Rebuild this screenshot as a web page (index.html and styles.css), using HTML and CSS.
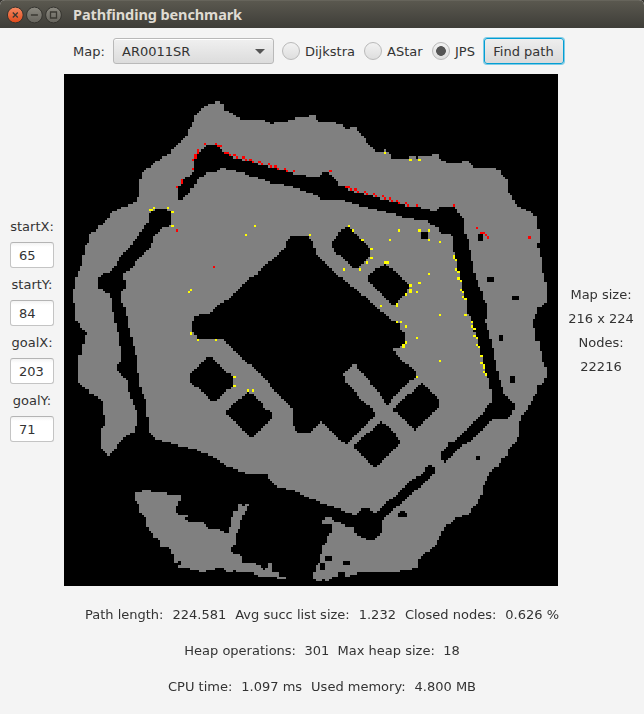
FILE: index.html
```html
<!DOCTYPE html>
<html lang="en">
<head>
<meta charset="utf-8">
<title>Pathfinding benchmark</title>
<link rel="stylesheet" href="styles.css">
</head>
<body>
<div class="window">
  <header class="titlebar">
    <svg class="controls" width="56" height="18" viewBox="0 0 56 18">
      <defs>
        <linearGradient id="close" x1="0" y1="0" x2="0" y2="1"><stop offset="0" stop-color="#f58a63"/><stop offset="1" stop-color="#e0491a"/></linearGradient>
        <linearGradient id="plain" x1="0" y1="0" x2="0" y2="1"><stop offset="0" stop-color="#8b8980"/><stop offset="1" stop-color="#66645d"/></linearGradient>
      </defs>
      <g stroke="#35342f" stroke-width="1">
        <circle cx="9.3" cy="9" r="7.9" fill="url(#close)"/>
        <circle cx="28.4" cy="9" r="7.9" fill="url(#plain)"/>
        <circle cx="47.5" cy="9" r="7.9" fill="url(#plain)"/>
      </g>
      <g fill="none" stroke="#3a3832" stroke-width="1.3">
        <path d="M6.8 6.5l5 5M11.8 6.5l-5 5"/>
        <path d="M24.9 9h7"/>
        <path d="M44.5 6h6v6h-6z"/>
      </g>
    </svg>
    <h1 class="title">Pathfinding benchmark</h1>
  </header>

  <div class="toolbar">
    <span class="map-label">Map:</span>
    <div class="select"><span>AR0011SR</span><i class="arrow"></i></div>
    <div class="radio dijkstra"><i class="dot"></i><span>Dijkstra</span></div>
    <div class="radio astar"><i class="dot"></i><span>AStar</span></div>
    <div class="radio jps"><i class="dot on"></i><span>JPS</span></div>
    <button class="find">Find path</button>
  </div>

  <main class="content">
    <section class="coords">
      <span class="name">startX:</span><div class="field">65</div>
      <span class="name">startY:</span><div class="field">84</div>
      <span class="name">goalX:</span><div class="field">203</div>
      <span class="name">goalY:</span><div class="field">71</div>
    </section>
    <canvas class="map" id="map" width="216" height="224"></canvas>
    <section class="info">
      <span>Map size:</span><span>216 x 224</span><span>Nodes:</span><span>22216</span>
    </section>
  </main>

  <footer class="stats">
    <div class="line"><span>Path length:</span><span>224.581</span><span>Avg succ list size:</span><span>1.232</span><span>Closed nodes:</span><span>0.626 %</span></div>
    <div class="line tight"><span>Heap operations:</span><span>301</span><span>Max heap size:</span><span>18</span></div>
    <div class="line"><span>CPU time:</span><span>1.097 ms</span><span>Used memory:</span><span>4.800 MB</span></div>
  </footer>
</div>
<script src="map.js"></script>
</body>
</html>
```
FILE: styles.css
```css
* { box-sizing: border-box; }
body {
  margin: 0;
  background: #3a3833;
  font: 13px/16px "DejaVu Sans", sans-serif;
  color: #333;
}
.window { width: 644px; height: 714px; background: #f4f4f4; overflow: hidden; border-radius: 5px 5px 0 0; }
.titlebar {
  height: 28px;
  display: flex;
  align-items: center;
  padding-left: 6px;
  background: linear-gradient(#5a584f, #3e3d38);
  border-top: 1px solid #66645b;
}
.controls { flex: none; }
.title {
  margin: 0 0 2px 11px;
  font: bold 14.5px/20px "Noto Sans", sans-serif;
  letter-spacing: -0.1px;
  color: #dfdbd2;
  white-space: nowrap;
}
.toolbar { height: 46px; display: flex; align-items: center; padding-left: 73px; white-space: nowrap; }
.toolbar span { padding-top: 2px; }
.map-label { width: 40px; }
.select {
  width: 161px;
  height: 26px;
  display: flex;
  align-items: center;
  justify-content: space-between;
  padding: 0 8px;
  border: 1px solid #b9b9b9;
  border-radius: 3px;
  background: linear-gradient(#f0f0f0, #dcdcdc);
  box-shadow: inset 0 1px #fff;
}
.arrow { border: 5px solid transparent; border-top-color: #555; border-bottom: 0; }
.radio { display: flex; align-items: center; gap: 5px; }
.dijkstra { margin-left: 8px; width: 82px; }
.astar { width: 68px; }
.jps { width: 52px; }
.dot {
  flex: none;
  width: 18px;
  height: 18px;
  border: 1px solid #b9b9b9;
  border-radius: 50%;
  background: linear-gradient(#f2f2f2, #dedede);
}
.dot.on { background: radial-gradient(circle, #555 0 4.5px, transparent 5.2px), linear-gradient(#f2f2f2, #dedede); }
.find {
  width: 80px;
  height: 26px;
  padding: 2px 1px 0 0;
  font: inherit;
  color: inherit;
  border: 1px solid #039ed3;
  border-radius: 3px;
  background: linear-gradient(#eee, #dadada);
  box-shadow: 0 0 0 1px #7fcbe6;
}
.content { height: 512px; display: flex; }
.coords { width: 64px; display: flex; flex-direction: column; align-items: center; padding-top: 141px; }
.name { height: 27px; line-height: 24px; }
.field {
  width: 44px;
  height: 26px;
  margin-bottom: 5px;
  padding-left: 8px;
  line-height: 25px;
  border: 1px solid #c4c4c4;
  border-top-color: #b4b4b4;
  border-radius: 3px;
  background: linear-gradient(#f3f3f3, #fff 4px);
}
.map { flex: none; width: 494px; height: 512px; background: #000; image-rendering: pixelated; }
.info { flex: 1; display: flex; flex-direction: column; align-items: center; gap: 8px; padding-top: 213px; white-space: nowrap; }
.stats { padding-top: 21px; display: flex; flex-direction: column; gap: 20px; }
.line { display: flex; justify-content: center; gap: 9px; white-space: nowrap; }
.line.tight { gap: 8.4px; }
```
FILE: map.js
```js
// Outlines use a 1482 x 1536 space that is sampled down to the 216 x 224 grid.
const COLS = 216, ROWS = 224, SX = 1482 / COLS, SY = 1536 / ROWS;

const floors = [
  `455,82 465,82 467,90 480,92 482,108 493,110 510,124 528,132 530,138 602,138 604,144 618,144 620,149 630,149 631,144 672,144 674,138 693,137 694,130 735,130 736,124 752,124
   756,132 768,144 816,144 816,150 830,152 842,158 843,165 858,165 858,158 878,158 880,170 890,178 906,192 908,206 918,214 933,226 934,234 960,234 960,226 966,226 966,234 972,236 980,245 987,254
   1036,254 1036,247 1056,247 1056,254 1062,254 1062,247 1104,246 1104,240 1124,240 1130,254 1138,261 1152,267 1194,267 1194,261 1214,261 1218,268 1227,281 1295,282 1296,288 1310,290 1316,308 1328,316
   1330,350 1340,364 1350,384 1370,402 1386,408 1406,420 1419,428 1419,466 1425,468 1426,508 1420,514 1426,522 1428,548 1435,550 1435,596 1439,602 1440,622 1445,624 1445,684 1434,696 1420,704 1413,732
   1406,736 1406,760 1412,764 1413,800 1425,804 1426,826 1433,834 1435,848 1440,876 1446,880 1446,908 1438,926 1424,932 1421,958 1406,972 1398,992 1393,1008 1386,1008 1372,1022 1371,1044 1365,1048 1365,1078
   1358,1104 1344,1118 1330,1132 1328,1144 1310,1158 1303,1176 1290,1184 1270,1208 1262,1232 1255,1238 1254,1260 1246,1276 1236,1290 1222,1306 1214,1322 1180,1330 1166,1340 1152,1351 1138,1360 1130,1386
   1118,1404 1110,1420 1096,1434 1082,1438 1070,1450 1062,1458 1062,1478 1042,1486 1008,1490 1006,1495 880,1495 878,1501 858,1503 856,1508 844,1508 842,1495 824,1495 822,1508 802,1510 794,1522 782,1522 780,1516
   776,1522 756,1522 748,1514 748,1494 754,1494 755,1474 768,1464 768,1440 774,1438 776,1418 786,1404 796,1378 802,1374 802,1350 776,1349 776,1338 786,1331 800,1331 804,1338 830,1346 850,1358 868,1358 870,1378
   888,1388 908,1398 933,1398 944,1386 953,1378 954,1338 978,1316 996,1298 1008,1294 1028,1270 1063,1244 1082,1224 1102,1208 1110,1198 1110,1180 1096,1173 1083,1188 1058,1212 1042,1216 1008,1256 968,1284
   946,1310 933,1316 923,1308 912,1304 898,1304 884,1312 876,1322 863,1320 838,1310 802,1296 768,1286 754,1276 738,1274 715,1262 693,1252 670,1246 638,1240 624,1222 612,1210 610,1200 542,1198 520,1188
   485,1174 460,1158 450,1150 435,1142 415,1136 398,1128 362,1118 338,1114 315,1106 295,1100 274,1094 268,1082 254,1076 253,1032 247,1028 246,1008 244,978 234,950 228,930 226,910 219,890 218,850 212,830
   206,800 198,770 192,745 186,715 180,690 171,680 171,655 186,645 186,618 178,610 178,600 200,585 220,560 250,530 265,505 268,490 290,466 315,455 323,444 323,415 310,408 285,404 258,412 254,444 240,460
   222,485 212,500 190,530 165,555 145,590 120,600 103,612 103,640 122,652 138,662 146,700 152,740 160,770 166,800 171,830 171,862 158,872 158,890 170,902 190,920 194,950 206,980 212,1008 218,1012 218,1050
   212,1072 180,1090 160,1110 156,1124 144,1130 134,1145 128,1138 118,1128 110,1124 110,1064 118,1056 124,1050 124,1022 118,1020 117,988 110,975 96,966 82,962 75,950 60,942 42,926 42,846 54,840 56,812
   62,806 62,788 68,780 62,770 50,760 42,744 34,738 33,684 27,680 27,648 33,645 34,612 42,608 42,590 54,575 55,546 62,540 64,520 69,510 75,500 75,482 95,470 104,456 130,438 145,414 170,402 195,394
   212,386 226,370 228,316 235,312 236,294 250,284 280,262 320,236 345,206 372,182 372,166 386,158 390,130 398,122 412,102 432,92 452,88`,
  `213,1255 233,1255 235,1248 260,1248 262,1254 308,1254 310,1262 350,1264 350,1280 343,1284 342,1296 336,1298 336,1316 350,1322 368,1326 364,1336 378,1343 416,1345 426,1356 438,1364 465,1366 480,1376
   494,1378 496,1360 502,1350 504,1332 510,1312 522,1308 523,1290 536,1290 540,1297 544,1290 555,1291 548,1308 534,1326 528,1352 520,1378 514,1384 514,1412 502,1424 502,1436 526,1440 534,1448 534,1466
   562,1468 590,1474 592,1482 600,1486 610,1478 610,1467 624,1468 624,1494 645,1496 646,1508 666,1508 666,1514 640,1514 636,1508 592,1508 572,1500 570,1494 515,1492 508,1488 506,1494 488,1494 486,1488
   472,1482 454,1484 452,1488 426,1489 424,1494 406,1494 404,1488 378,1488 376,1482 344,1482 342,1473 354,1473 350,1462 332,1466 330,1446 322,1432 310,1420 290,1416 288,1398 270,1392 258,1370 248,1352
   246,1336 234,1320 226,1312 224,1290 214,1276`
];

const walls = [
  // Ring wall, north to south-east
  `350,382 342,376 342,342 352,330 360,316 384,300 390,286 390,258 398,248 405,234 420,220 430,213 455,212 470,224 485,240 510,250 560,264 620,280 680,294 690,301 735,306 768,306 775,294 795,294 804,306
   816,320 830,338 845,340 855,350 890,358 930,368 960,378 1000,386 1035,398 1060,399 1090,405 1100,411 1118,408 1132,398 1170,398 1180,412 1190,428 1200,434 1201,470 1207,494 1216,498 1216,522 1222,548
   1228,582 1235,606 1243,636 1252,654 1256,676 1268,686 1268,726 1262,742 1268,748 1274,776 1282,802 1288,828 1296,870 1303,908 1310,928 1318,956 1336,972 1350,988 1350,1008 1342,1020 1330,1034 1283,1035
   1273,1050 1238,1086 1218,1104 1198,1110 1178,1132 1150,1160 1143,1167 1134,1158 1131,1136 1143,1126 1154,1108 1173,1102 1200,1074 1238,1036 1260,1012 1270,998 1281,982 1281,950 1275,942 1273,916 1266,900
   1258,868 1250,838 1243,813 1236,786 1228,760 1222,733 1210,720 1206,716 1206,678 1198,658 1190,623 1184,598 1178,564 1172,554 1168,520 1166,494 1158,482 1132,478 1124,462 1102,452 1090,440 1056,436
   1014,428 988,420 938,408 883,394 842,380 774,377 754,364 738,357 715,348 690,340 655,332 625,328 600,318 560,306 540,297 495,288 485,283 470,283 460,292 428,296 412,308 398,322 390,338 376,350 366,368`,
  // Central block
  `668,504 675,496 687,487 735,487 742,498 750,512 754,538 770,554 803,584 836,616 888,656 943,704 988,742 1008,746 1010,762 1020,778 1022,806 1014,818 988,824 1000,844 1028,870 1056,892 1057,906
   1028,932 994,964 970,994 963,984 943,954 916,922 890,896 876,872 866,870 838,898 844,922 878,960 903,986 928,1006 933,1026 908,1048 878,1078 846,1110 838,1106 808,1076 772,1044 762,1050 738,1076
   705,1076 687,1056 686,1006 660,978 630,946 600,914 570,884 535,852 500,820 480,800 465,792 452,796 405,796 390,780 384,774 384,746 392,732 405,722 436,720 450,704 480,680 500,672 520,650 550,618
   580,600 610,568 640,544 664,520`,
  // Diamond-shaped rooms
  `428,850 446,852 460,868 505,908 508,938 490,950 456,980 440,980 380,922 378,900 400,880`,
  `550,956 562,958 608,1006 624,1014 624,1032 600,1054 568,1090 555,1088 530,1064 487,1020 486,1008 500,998`,
  `850,460 832,470 803,505 803,516 808,528 848,564 868,582 886,580 908,558 920,546 920,526 896,502 868,475 856,462`,
  `963,570 976,578 1003,604 1038,638 1022,660 993,692 981,688 943,652 913,620 916,606 943,580`,
  `1073,928 1088,942 1123,972 1124,998 1110,1014 1083,1040 1053,1070 1038,1054 1002,1020 986,1010 1013,982 1038,958`,
  `953,1042 978,1066 1013,1102 988,1126 933,1180 903,1150 871,1122 878,1106 913,1076`
];

// Free-standing obstacles: x, y, width, height
const blocks = [
  [1071, 472, 19, 22], [1242, 480, 13, 22], [1269, 610, 21, 14], [1344, 666, 21, 12], [1302, 781, 15, 21],
  [1338, 906, 12, 20], [1233, 1146, 15, 12], [1002, 1316, 27, 14], [1009, 1309, 13, 7], [782, 1446, 20, 14],
  [768, 1467, 14, 20], [837, 1461, 20, 13]
];

const red = `421,210 456,210 462,216 469,216 402,230 402,236 395,243 395,250 388,258 387,285 353,319 353,326 339,339 339,469 487,237 493,237 497,243 510,243 516,250 538,250 545,257 558,258 565,264
  586,265 593,270 613,270 620,277 634,277 641,284 661,285 668,291 690,291 798,291 848,339 854,339 860,346 874,346 881,353 902,354 909,360 929,360 936,367 956,367 963,374 978,374 984,381 998,381
  1005,387 1025,387 1032,394 1059,394 1169,394 1237,462 1251,476 1258,476 1266,483 1272,490 1394,490 449,579`;
const yellow = `258,408 264,408 270,402 312,402 326,414 326,456 573,456 545,483 738,483 963,237 1038,258 1065,258 853,456 867,469 894,497 978,497 1005,469 1065,469 1093,469 1093,497 1128,504
  374,654 381,648 381,778 402,798 456,798 510,909 510,936 552,950 565,950 922,525 922,552 909,566 888,586 840,586 964,566 970,566 1093,600 1066,627 1038,633 1038,647 1038,654 1059,654 1025,662
  998,689 998,696 949,696 1128,723 1202,723 998,744 1011,744 1025,758 1059,792 1025,806 1018,813 1018,819 1128,861 1059,909 1169,545 1169,551 1176,558 1176,586 1182,593 1182,614 1190,620 1190,648
  1197,654 1197,669 1203,675 1224,744 1224,758 1230,765 1230,786 1238,792 1238,813 1245,819 1251,847 1251,867 1257,873 1257,880 1257,894 1265,901`;

const ctx = document.getElementById("map").getContext("2d");
const toPath = points => new Path2D("M" + points.trim().split(/\s+/).join("L") + "Z");
const floorPaths = floors.map(toPath), wallPaths = walls.map(toPath);

ctx.fillStyle = "#000";
ctx.fillRect(0, 0, COLS, ROWS);
ctx.fillStyle = "#808080";
for (let row = 0; row < ROWS; row++) {
  for (let col = 0; col < COLS; col++) {
    const x = (col + 0.5) * SX, y = (row + 0.5) * SY;
    const inside = p => ctx.isPointInPath(p, x, y);
    const blocked = blocks.some(([bx, by, w, h]) => x >= bx && x < bx + w && y >= by && y < by + h);
    if (floorPaths.some(inside) && !wallPaths.some(inside) && !blocked) ctx.fillRect(col, row, 1, 1);
  }
}

function mark(points, color) {
  ctx.fillStyle = color;
  for (const pair of points.trim().split(/\s+/)) {
    const [x, y] = pair.split(",").map(Number);
    ctx.fillRect(Math.floor(x / SX), Math.floor(y / SY), 1, 1);
  }
}
mark(red, "#f00");
mark(yellow, "#ff0");
```
